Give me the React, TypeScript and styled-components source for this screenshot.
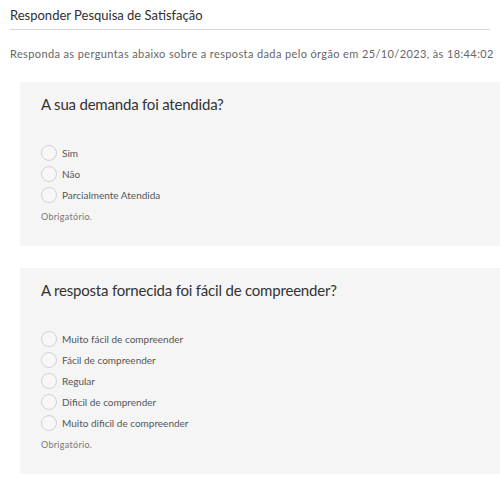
import React from "react";
import styled, { createGlobalStyle } from "styled-components";

const Global = createGlobalStyle`
  html, body { margin: 0; padding: 0; background: #fff; overflow: hidden; }
  body { font-family: "Lato", "Open Sans", sans-serif; }
`;

const Page = styled.div`
  width: 500px;
`;

const Header = styled.header`
  padding: 0 10px;
`;

const Title = styled.h1`
  margin: 0;
  padding-top: 5px;
  font-size: 13px;
  line-height: 20px;
  font-weight: 400;
  color: #2f2f2f;
  letter-spacing: 0;
`;

const Rule = styled.hr`
  margin: 4px 0 0 0;
  border: 0;
  border-top: 1px solid #d6d6d6;
`;

const Intro = styled.p`
  margin: 17px 0 0 0;
  font-size: 11px;
  line-height: 14px;
  color: #666;
  letter-spacing: 0.38px;
  white-space: nowrap;
`;

const Cards = styled.div`
  display: flex;
  flex-direction: column;
  gap: 22px;
  margin: 21px 0 0 20px;
`;

const Card = styled.section`
  background: #f5f5f5;
  padding: 12px 21px 22px;
`;

const Question = styled.h2`
  margin: 0;
  font-size: 15px;
  line-height: 20px;
  font-weight: 400;
  color: #333;
  letter-spacing: -0.2px;
`;

const Options = styled.div`
  display: flex;
  flex-direction: column;
  margin-top: 28px;
`;

const Option = styled.label`
  display: flex;
  align-items: center;
  gap: 5px;
  height: 21px;
  font-size: 10px;
  color: #555;
`;

const Circle = styled.span`
  box-sizing: border-box;
  width: 16px;
  height: 16px;
  border-radius: 50%;
  border: 1px solid #d2d2d2;
  background: #f7f7f7;
  flex: none;
`;

const Required = styled.div`
  margin-top: 5px;
  font-size: 9px;
  line-height: 14px;
  color: #777;
  letter-spacing: 0.3px;
`;

const questions = [
  {
    q: "A sua demanda foi atendida?",
    opts: ["Sim", "Não", "Parcialmente Atendida"],
  },
  {
    q: "A resposta fornecida foi fácil de compreender?",
    opts: [
      "Muito fácil de compreender",
      "Fácil de compreender",
      "Regular",
      "Dificil de comprender",
      "Muito dificil de compreender",
    ],
  },
];

export default function App() {
  return (
    <Page>
      <Global />
      <Header>
        <Title>Responder Pesquisa de Satisfação</Title>
        <Rule />
        <Intro>
          Responda as perguntas abaixo sobre a resposta dada pelo órgão em 25/10/2023, às 18:44:02
        </Intro>
      </Header>
      <Cards>
        {questions.map((item) => (
          <Card key={item.q}>
            <Question>{item.q}</Question>
            <Options>
              {item.opts.map((o) => (
                <Option key={o}>
                  <Circle />
                  {o}
                </Option>
              ))}
            </Options>
            <Required>Obrigatório.</Required>
          </Card>
        ))}
      </Cards>
    </Page>
  );
}
